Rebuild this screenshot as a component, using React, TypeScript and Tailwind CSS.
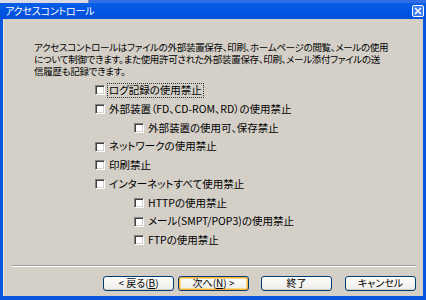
import React from "react";

const font = "font-['Noto_Sans_CJK_JP','Noto_Sans',sans-serif] [font-feature-settings:'palt']";

function Box() {
  return (
    <span className="w-[10px] h-[10px] shrink-0 bg-white border border-t-[#808080] border-l-[#808080] border-b-white border-r-white shadow-[inset_1px_1px_0_#404040,inset_-1px_-1px_0_#d4d0c8]" />
  );
}

function Row({ label, indent, focus }: { label: string; indent?: boolean; focus?: boolean }) {
  return (
    <div className={`h-[18.75px] flex items-center gap-[3px] ${indent ? "pl-[130px]" : "pl-[91px]"}`}>
      <Box />
      <span
        className={`text-[10.5px] leading-none text-black whitespace-nowrap px-[1px] py-[1px] ${
          focus ? "outline outline-1 outline-dotted outline-[#333]" : ""
        }`}
      >
        {label}
      </span>
    </div>
  );
}

function Btn({ children, def }: { children: React.ReactNode; def?: boolean }) {
  return (
    <div
      className={`w-[71px] h-[15px] rounded-[3px] border border-[#003c74] flex items-center justify-center text-[10px] leading-none text-black bg-gradient-to-b from-white to-[#ecebe6] ${
        def ? "shadow-[inset_0_0_0_1px_#f8b33c,inset_0_0_0_2px_#fdd889]" : "shadow-[inset_0_-1px_0_#d6d0c5]"
      }`}
    >
      {children}
    </div>
  );
}

export default function App() {
  return (
    <div className={`w-[426px] h-[300px] flex flex-col overflow-hidden ${font}`}>
      <div className="h-[3px] flex">
        <div className="w-[88px] bg-[#d8dbe6]" />
        <div className="w-[1px] bg-[#8a8a9a]" />
        <div className="flex-1 bg-[#2f6ee6]" />
      </div>
      <div className="h-[16px] flex items-center justify-between pl-[5px] pr-[2px] bg-gradient-to-b from-[#0a5fe8] via-[#0054e3] to-[#0350dc]">
        <span className="text-white text-[10px] leading-none tracking-[-0.2px]">アクセスコントロール</span>
        <div className="w-[12px] h-[12px] rounded-[2px] border border-white bg-[#3c7cf0] flex items-center justify-center">
          <svg width="8" height="8" viewBox="0 0 8 8">
            <path d="M1 1L7 7M7 1L1 7" stroke="white" strokeWidth="1.6" />
          </svg>
        </div>
      </div>
      <div className="flex-1 flex flex-col bg-[#0b55dd] px-[3px] pb-[4px]">
        <div className="flex-1 flex flex-col bg-[#d4d0c8] border-l border-[#e9e6dc]">
          <div className="pt-[22px] pl-[30px] text-[9.5px] leading-[12px] tracking-[-0.3px] text-black whitespace-nowrap">
            アクセスコントロールはファイルの外部装置保存、印刷、ホームページの閲覧、メールの使用
            <br />
            について制御できます。また使用許可された外部装置保存、印刷、メール添付ファイルの送
            <br />
            信履歴も記録できます。
          </div>
          <div className="mt-[4px] flex flex-col">
            <Row label="ログ記録の使用禁止" focus />
            <Row label="外部装置（FD、CD-ROM、RD）の使用禁止" />
            <Row label="外部装置の使用可、保存禁止" indent />
            <Row label="ネットワークの使用禁止" />
            <Row label="印刷禁止" />
            <Row label="インターネットすべて使用禁止" />
            <Row label="HTTPの使用禁止" indent />
            <Row label="メール(SMPT/POP3)の使用禁止" indent />
            <Row label="FTPの使用禁止" indent />
          </div>
          <div className="mt-[15px] ml-[8px] mr-[7px] h-[2px] border-t border-[#9d9d9d] border-b border-b-white" />
          <div className="mt-[9px] flex pl-[99px]">
            <Btn>&lt; 戻る(<u>B</u>)</Btn>
            <div className="ml-[4px]">
              <Btn def>次へ(<u>N</u>) &gt;</Btn>
            </div>
            <div className="ml-[12px]">
              <Btn>終了</Btn>
            </div>
            <div className="ml-[13px]">
              <Btn>キャンセル</Btn>
            </div>
          </div>
        </div>
      </div>
    </div>
  );
}
